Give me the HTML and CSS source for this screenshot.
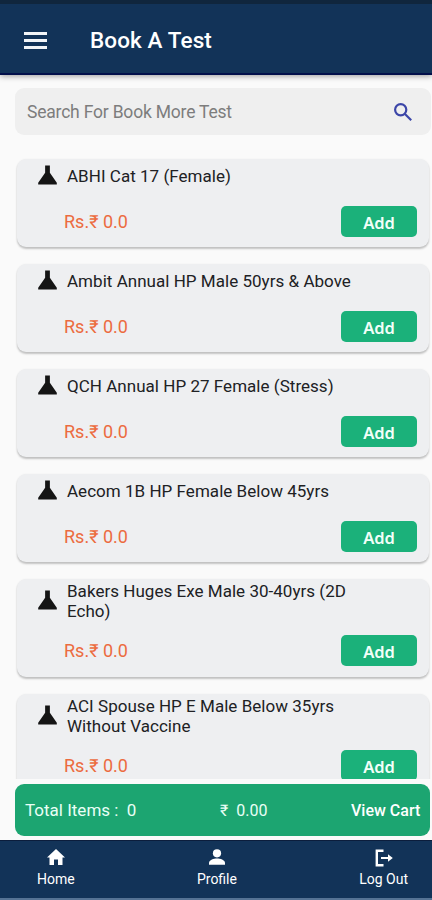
FILE: index.html
```html
<!DOCTYPE html>
<html lang="en">
<head>
<meta charset="utf-8">
<meta name="viewport" content="width=device-width, initial-scale=1">
<title>Book A Test</title>
<link rel="stylesheet" href="styles.css">
</head>
<body>
<svg width="0" height="0" class="defs">
  <symbol id="flask" viewBox="0 0 20 20"><path d="M7.500 0h5v7.500L19.800 18.200V20H.2v-1.800L7.500 7.500z"/></symbol>
</svg>
<div class="app">
  <header class="bar">
    <svg class="menu" viewBox="0 0 23 17"><path d="M0 0h23v3H0zM0 7h23v3H0zM0 14h23v3H0z"/></svg>
    <h1>Book A Test</h1>
  </header>
  <div class="search">
    <span>Search For Book More Test</span>
    <svg viewBox="0 0 18 18"><circle cx="6.7" cy="6.7" r="5.6"/><path d="M11 11l6.2 6.2"/></svg>
  </div>
  <main class="list">
    <article class="card"><div class="top"><svg><use href="#flask"/></svg><h2>ABHI Cat 17 (Female)</h2></div><div class="bottom"><span class="price">Rs.₹ 0.0</span><button>Add</button></div></article>
    <article class="card"><div class="top"><svg><use href="#flask"/></svg><h2>Ambit Annual HP Male 50yrs &amp; Above</h2></div><div class="bottom"><span class="price">Rs.₹ 0.0</span><button>Add</button></div></article>
    <article class="card"><div class="top"><svg><use href="#flask"/></svg><h2>QCH Annual HP 27 Female (Stress)</h2></div><div class="bottom"><span class="price">Rs.₹ 0.0</span><button>Add</button></div></article>
    <article class="card"><div class="top"><svg><use href="#flask"/></svg><h2>Aecom 1B HP Female Below 45yrs</h2></div><div class="bottom"><span class="price">Rs.₹ 0.0</span><button>Add</button></div></article>
    <article class="card tall"><div class="top"><svg><use href="#flask"/></svg><h2>Bakers Huges Exe Male 30-40yrs (2D<br>Echo)</h2></div><div class="bottom"><span class="price">Rs.₹ 0.0</span><button>Add</button></div></article>
    <article class="card tall"><div class="top"><svg><use href="#flask"/></svg><h2>ACI Spouse HP E Male Below 35yrs<br>Without Vaccine</h2></div><div class="bottom"><span class="price">Rs.₹ 0.0</span><button>Add</button></div></article>
  </main>
  <div class="cart">
    <span class="items">Total Items :&nbsp; 0</span>
    <span class="sum">₹&nbsp; 0.00</span>
    <span class="view">View Cart</span>
  </div>
  <nav class="tabs">
    <a class="home"><svg viewBox="0 0 18 16"><path d="M7 16v-5.500h4V16h4.500V8.500H18L9 0 0 8.500h2.500V16z"/></svg><span>Home</span></a>
    <a class="profile"><svg viewBox="0 0 18 16"><circle cx="9" cy="4.300" r="4.100"/><path d="M1 15.700v-2c0-2.700 5-4.200 8-4.200s8 1.500 8 4.200v2z"/></svg><span>Profile</span></a>
    <a class="logout"><svg viewBox="0 0 18 18"><path d="M8.500 1.700H1.800v14.600h6.700" fill="none" stroke="#fff" stroke-width="2.400"/><path d="M6 8h7V5.200l4.800 3.800-4.800 3.800V10H6z"/></svg><span>Log Out</span></a>
  </nav>
</div>
</body>
</html>
```
FILE: styles.css
```css
* { box-sizing: border-box; }
body {
  margin: 0;
  background: #fafafa;
  font-family: Roboto, "Noto Sans", sans-serif;
  color: #202124;
}
.defs { display: block; }
.app {
  display: flex;
  flex-direction: column;
  width: 432px;
  height: 900px;
  overflow: hidden;
}
.bar {
  flex: none;
  display: flex;
  align-items: center;
  height: 75px;
  padding: 3px 0 0 24px;
  background: #123358;
  border-top: 4px solid #10263d;
  border-bottom: 2px solid #020f4a;
  box-shadow: 0 1px 6px rgba(0, 0, 0, .4);
}
.menu { width: 23px; height: 17px; fill: #f2f5f8; }
h1 {
  margin: 0 0 0 43px;
  font-size: 22.500px;
  letter-spacing: .1px;
  line-height: 28px;
  font-weight: 500;
  color: #fff;
}
.search {
  flex: none;
  display: flex;
  align-items: center;
  justify-content: space-between;
  height: 47px;
  margin: 13px 1px 0 15px;
  padding: 0 19px 0 12px;
  border-radius: 9px;
  background: #efefef;
  font-size: 17.500px;
  letter-spacing: -.2px;
  color: #7d7d7d;
}
.search svg { width: 18px; height: 18px; fill: none; stroke: #3c46a8; stroke-width: 2.200; }
.list {
  flex: none;
  height: 634px;
  margin-top: 10px;
  padding: 14px 3px 0 17px;
  overflow: hidden;
}
.card {
  height: 88px;
  margin-bottom: 17px;
  padding: 7px 12px 0 21px;
  border-radius: 9px;
  background: #eeeff1;
  box-shadow: 0 2px 2px rgba(0, 0, 0, .22), 0 0 2px rgba(0, 0, 0, .06);
}
.card.tall { height: 98px; padding-top: 2px; }
.top { display: flex; align-items: center; }
.top svg { flex: none; width: 19px; height: 20px; margin: -1px 10px 1px 0; fill: #151515; }
h2 {
  margin: 0;
  font-size: 17px;
  letter-spacing: .03px;
  line-height: 20px;
  font-weight: 400;
  white-space: nowrap;
}
.bottom {
  display: flex;
  align-items: center;
  justify-content: space-between;
  margin: 20px 0 0 26px;
}
.tall .bottom { margin-top: 14px; }
.price { font-size: 18px; color: #ec6b3f; }
button {
  width: 76px;
  height: 31px;
  padding: 3px 0 0;
  border: 0;
  border-radius: 5px;
  background: #1bb17a;
  color: #f2fff9;
  font: 600 16.500px/28px "Noto Sans", sans-serif;
}
.cart {
  flex: none;
  display: grid;
  grid-template-columns: 195px 131px 1fr;
  align-items: center;
  height: 52px;
  margin: 5px 2px 0 15px;
  padding-left: 10px;
  border-radius: 9px;
  background: #1ca571;
  color: #e9fff6;
  font-size: 17px;
}
.sum { font-size: 16px; }
.view { font-size: 16px; font-weight: 500; color: #fff; white-space: nowrap; }
.tabs {
  flex: none;
  display: flex;
  justify-content: space-between;
  height: 60px;
  margin-top: 4px;
  padding: 8px 24px 0 37px;
  border-top: 1px solid #0b1d3c;
  border-bottom: 2px solid #557394;
  background: #123358;
  color: #fff;
  font-size: 14px;
  line-height: 18px;
}
.tabs a { display: flex; flex-direction: column; align-items: center; }
.tabs svg { width: 18px; height: 16px; margin-bottom: 5px; fill: #fff; }
.logout svg { height: 18px; margin-bottom: 3px; }
```
